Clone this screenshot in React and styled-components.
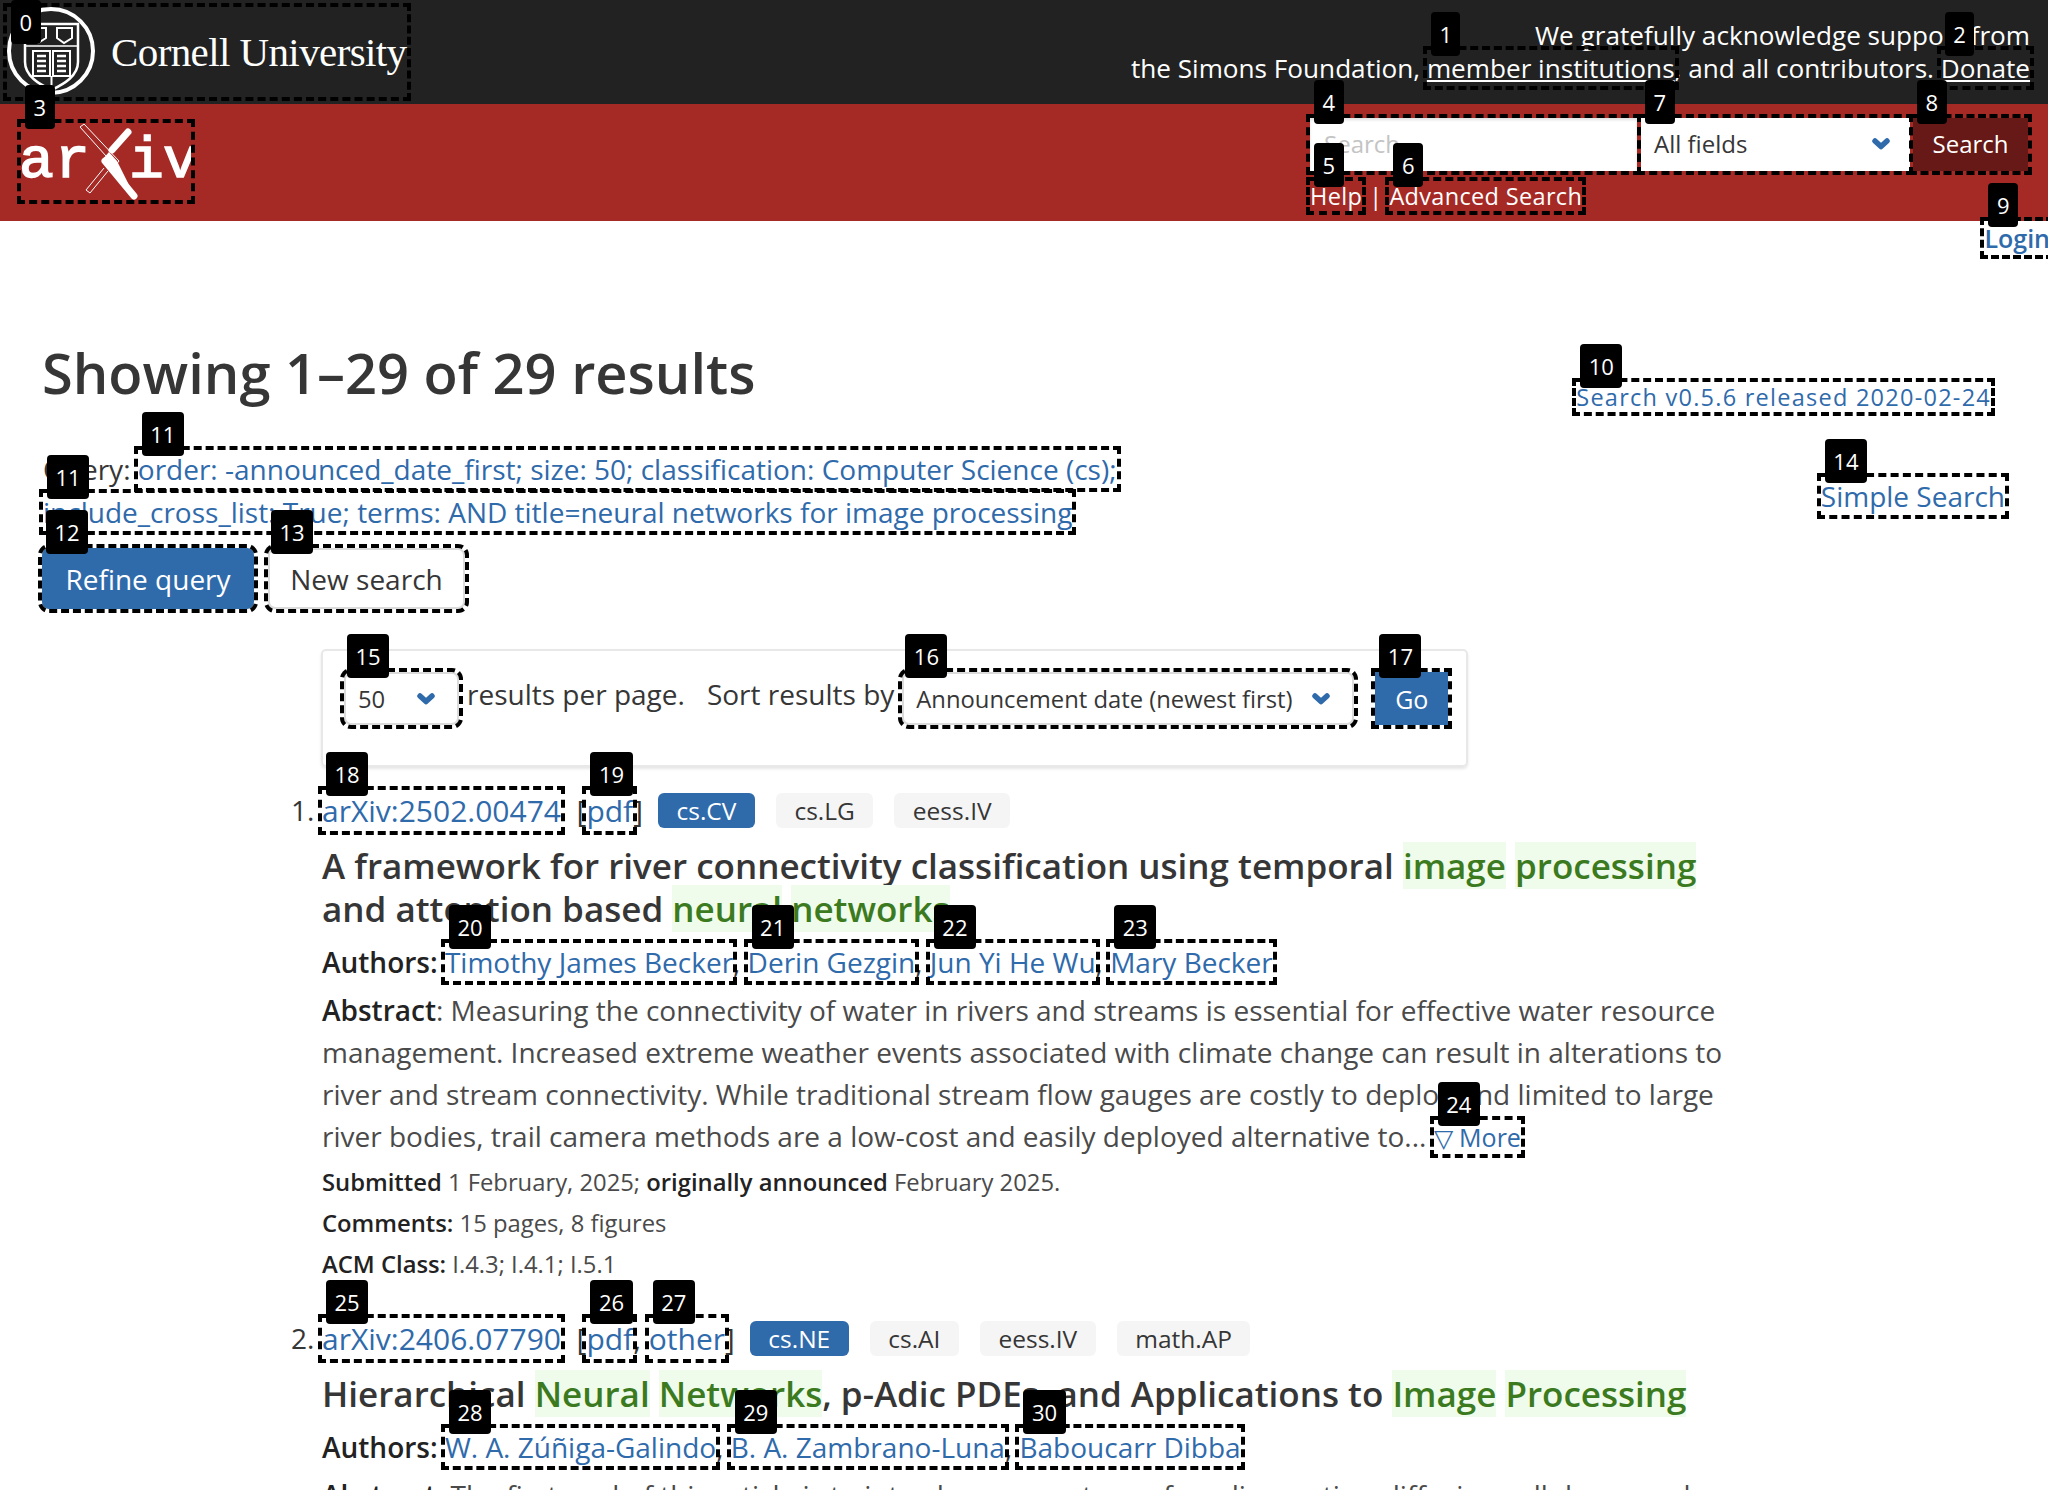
import React from 'react'
import styled, { createGlobalStyle } from 'styled-components'

const GlobalStyle = createGlobalStyle`
  html, body {
    margin: 0;
    padding: 0;
    background: #fff;
  }
  body {
    font-family: "Open Sans", "Noto Sans", sans-serif;
    color: #363636;
    overflow: hidden;
  }
  #root {
    width: 2048px;
    height: 1490px;
    overflow: hidden;
  }
`

const TopBar = styled.div`
  height: 104px;
  background: #222;
  display: flex;
  justify-content: space-between;
  align-items: flex-start;
  color: #fff;
`

const CornellBox = styled.a`
  position: relative;
  display: flex;
  align-items: center;
  gap: 14px;
  width: 400px;
  height: 90px;
  margin: 7px 0 0 7px;
  outline: 4px dashed #000;
  color: #fff;
`

const CornellName = styled.span`
  font-family: "Liberation Serif", serif;
  font-size: 41px;
  letter-spacing: -0.6px;
  white-space: nowrap;
`

const Support = styled.div`
  margin: 19px 18px 0 0;
  font-size: 26.150px;
  line-height: 33px;
  text-align: right;
`

const TopLink = styled.a`
  position: relative;
  color: #fff;
  text-decoration: underline;
  outline: 4px dashed #000;
`

const RedBar = styled.div`
  height: 117px;
  background: #a52a25;
  display: flex;
  justify-content: space-between;
  align-items: flex-start;
`

const ArxivBox = styled.a`
  position: relative;
  display: block;
  width: 170px;
  height: 77px;
  margin: 19px 0 0 21px;
  outline: 4px dashed #000;
`

const SearchArea = styled.div`
  margin: 14px 20px 0 0;
  display: flex;
  flex-direction: column;
  width: 718px;
`

const SearchRow = styled.div`
  display: flex;
  height: 53px;
`

const Field = styled.span`
  position: relative;
  display: flex;
  outline: 4px dashed #000;
  flex: none;
  width: ${p => p.$width};
  margin-right: ${p => p.$gap || '0'};
`

const SearchInput = styled.input`
  width: 100%;
  box-sizing: border-box;
  border: 0;
  padding: 0 14px 2px;
  font: 400 24px "Open Sans", sans-serif;
  background: #fff;
  box-shadow: inset 0 2px 3px rgba(10, 10, 10, 0.12);
  &::placeholder {
    color: #c4c4c4;
  }
`

const FieldSelect = styled.div`
  display: flex;
  align-items: center;
  justify-content: space-between;
  box-sizing: border-box;
  width: 100%;
  padding: 0 20px 2px 13px;
  background: #fff;
  font-size: 24px;
  color: #363636;
`

const SearchButton = styled.button`
  width: 100%;
  border: 0;
  padding: 0 0 2px;
  background: #661916;
  color: #fff;
  font: 400 24px "Open Sans", sans-serif;
`

const SearchHelp = styled.div`
  display: flex;
  align-items: center;
  margin-top: 10px;
  font-size: 23.500px;
  letter-spacing: 0.33px;
  line-height: 30px;
  color: #fff;
`

const HelpLink = styled.a`
  position: relative;
  display: inline-block;
  color: #fff;
  outline: 4px dashed #000;
`

const HelpSep = styled.span`
  margin: 0 7px;
`

const Page = styled.main`
  position: relative;
`

const LoginRow = styled.div`
  display: flex;
  justify-content: flex-end;
  height: 36px;
  margin-right: -2px;
`

const LoginLink = styled.a`
  position: relative;
  align-self: flex-start;
  font-size: 25px;
  font-weight: 600;
  color: #2f6aab;
  outline: 4px dashed #000;
`

const HeadRow = styled.div`
  display: flex;
  justify-content: space-between;
  padding: 79px 57px 0 42px;
`

const Heading = styled.h1`
  margin: 0;
  font-size: 56px;
  font-weight: 600;
  line-height: 72px;
  color: #363636;
`

const Release = styled.a`
  position: relative;
  display: inline-block;
  margin-top: 46px;
  align-self: flex-start;
  font-size: 23.500px;
  letter-spacing: 1.25px;
  line-height: 30px;
  white-space: nowrap;
  color: #2f6aab;
  outline: 4px dashed #000;
`

const QueryRow = styled.div`
  display: flex;
  justify-content: space-between;
  padding: 0 43px;
  margin-top: 36px;
`

const QueryText = styled.div`
  font-size: 28px;
  line-height: 43px;
  color: #363636;
`

const Link = styled.a`
  position: relative;
  color: #2f6aab;
  font-size: ${p => p.$size || 'inherit'};
  outline: 4px dashed #000;
`

const SimpleLink = styled(Link)`
  align-self: flex-start;
  font-size: 28px;
  margin-top: 29px;
`

const ButtonRow = styled.div`
  display: flex;
  gap: 14px;
  padding: 14px 42px 0;
`

const QueryButton = styled.a`
  position: relative;
  display: flex;
  align-items: center;
  justify-content: center;
  box-sizing: border-box;
  width: ${p => p.$width};
  height: 61px;
  border-radius: 7px;
  font-size: 28px;
  outline: 4px dashed #000;
  background: ${p => (p.$primary ? '#2f6aab' : '#fff')};
  color: ${p => (p.$primary ? '#fff' : '#363636')};
  border: ${p => (p.$primary ? '0' : '2px solid #dbdbdb')};
`

const Controls = styled.div`
  box-sizing: border-box;
  display: flex;
  align-items: flex-start;
  width: 1147px;
  height: 118px;
  margin: 40px 0 0 321px;
  padding: 21px 20px 0 21px;
  border: 2px solid #e8e8e8;
  border-radius: 5px;
  box-shadow: 0 2px 3px rgba(10, 10, 10, 0.1);
  font-size: 28px;
`

const ControlSelect = styled.div`
  position: relative;
  display: flex;
  align-items: center;
  justify-content: space-between;
  box-sizing: border-box;
  flex: none;
  width: ${p => p.$width};
  height: 53px;
  margin-left: ${p => p.$left || '0'};
  padding: 0 22px 0 12px;
  border: 2px solid #dbdbdb;
  border-radius: 7px;
  font-size: 23.800px;
  white-space: nowrap;
  outline: 4px dashed #000;
`

const ControlLabel = styled.span`
  margin: ${p => p.$margin};
  line-height: 44px;
  white-space: nowrap;
`

const GoButton = styled.a`
  position: relative;
  display: flex;
  align-items: center;
  justify-content: center;
  flex: none;
  width: 73px;
  height: 53px;
  margin-left: 21px;
  background: #2f6aab;
  color: #fff;
  font-size: 25px;
  outline: 4px dashed #000;
`

const ResultList = styled.ol`
  list-style: none;
  margin: 19px 0 0 0;
  padding: 0 0 0 322px;
  width: 1411px;
`

const Result = styled.li`
  position: relative;
  margin-bottom: 29px;
`

const IdRow = styled.div`
  display: flex;
  align-items: center;
  height: 48px;
  font-size: 30px;
  white-space: pre;
`

const Number = styled.span`
  position: absolute;
  left: -31px;
  font-size: 28px;
`

const Tags = styled.span`
  display: flex;
  gap: 21px;
  margin-left: 15px;
`

const Tag = styled.span`
  display: flex;
  align-items: center;
  height: 35px;
  padding: 0 18.500px;
  border-radius: 6px;
  font-size: 24.500px;
  background: ${p => (p.$primary ? '#2f6aab' : '#f5f5f5')};
  color: ${p => (p.$primary ? '#fff' : '#363636')};
`

const Title = styled.p`
  margin: 10px 0 0;
  font-size: 35px;
  font-weight: 600;
  line-height: 43px;
  color: #363636;
`

const Hit = styled.span`
  background: #effceb;
  color: #3c7a1f;
`

const Authors = styled.p`
  margin: 11px 0 0;
  font-size: 28px;
  line-height: 42px;
  color: #363636;
`

const Strong = styled.strong`
  font-weight: 600;
  color: #222;
`

const Abstract = styled.p`
  margin: 6px 0 0;
  font-size: 28px;
  line-height: 42px;
  color: #4a4a4a;
`

const Meta = styled.p`
  margin: ${p => p.$margin || '0'};
  font-size: 23.800px;
  line-height: 41px;
  color: #4a4a4a;
`

const Badge = styled.span`
  position: absolute;
  z-index: 10;
  left: 4px;
  top: -38px;
  height: 44px;
  padding: 0 8.500px;
  border-radius: 4px;
  background: #000;
  color: #fff;
  font: 400 22px/44px "Open Sans", sans-serif;
  letter-spacing: 0;
  text-decoration: none;
  display: inline-block;
  white-space: nowrap;
`

const CornellBadge = styled(Badge)`
  top: -7px;
`

// the parent has a 2px border here, so absolute offsets start 2px further in
const BorderedBadge = styled(Badge)`
  left: 1px;
  top: -40px;
`

const Chevron = () => (
  <svg width="18" height="12" viewBox="0 0 18 12" fill="none">
    <path d="M3 3 L9 8.500 L15 3" stroke="#2f6aab" strokeWidth="5.500" strokeLinecap="round" strokeLinejoin="round" />
  </svg>
)

const CornellSeal = () => (
  <svg width="90" height="90" viewBox="0 0 90 90" fill="none" stroke="#fff" style={{ flex: 'none' }}>
    <circle cx="44" cy="44" r="42" strokeWidth="4" />
    <path d="M18 17 H71 V55 C71 69 57 77 44.500 83 C32 77 18 69 18 55 Z" strokeWidth="2.500" />
    <path d="M18 39 H71" strokeWidth="1.500" />
    <path d="M24 21 H39 V31 L31 36 L24 31 Z M50 21 H65 V31 L57 36 L50 31 Z" strokeWidth="2" />
    <path d="M26 44 H43 V69 H26 Z M46 44 H63 V69 H46 Z" strokeWidth="2" />
    <path d="M30 49 H39 M30 54 H39 M30 59 H39 M30 64 H39 M50 49 H59 M50 54 H59 M50 59 H59 M50 64 H59" strokeWidth="2.500" />
    <path d="M44.500 69 V83" strokeWidth="2" />
  </svg>
)

const ArxivLogo = () => (
  <svg width="170" height="77" viewBox="0 0 170 77" fill="#fff">
    <g fontFamily="'Liberation Mono', monospace" fontWeight="400" fontSize="58" stroke="#fff" strokeWidth="1.500">
      <text x="-2" y="54">a</text>
      <text x="34" y="54">r</text>
      <text x="108" y="54">i</text>
      <text x="142" y="54">v</text>
    </g>
    <path d="M107 9 L91 27" stroke="#fff" strokeWidth="7" strokeLinecap="round" />
    <path d="M84 38 L113 73" stroke="#fff" strokeWidth="7" strokeLinecap="round" />
    <path d="M81 37 L88 29 L96 38 L114 74 Z" stroke="none" />
    <path d="M63 1 L98 38 L94 43 L59 4 Z" fill="none" stroke="#fff" strokeWidth="1" />
    <path d="M87 48 L69 70 L65 67 L83 45" fill="none" stroke="#fff" strokeWidth="1" />
  </svg>
)

const authorsA = [['20', 'Timothy James Becker'], ['21', 'Derin Gezgin'], ['22', 'Jun Yi He Wu'], ['23', 'Mary Becker']]
const authorsB = [['28', 'W. A. Zúñiga-Galindo'], ['29', 'B. A. Zambrano-Luna'], ['30', 'Baboucarr Dibba']]

const AuthorLinks = ({ list }) => (
  <Authors>
    <Strong>Authors: </Strong>
    {list.map(([n, name], i) => (
      <React.Fragment key={n}>
        <Link>
          <Badge>{n}</Badge>
          {name}
        </Link>
        {i < list.length - 1 ? ', ' : ''}
      </React.Fragment>
    ))}
  </Authors>
)

export default function App() {
  return (
    <>
      <GlobalStyle />
      <TopBar>
        <CornellBox>
          <CornellBadge>0</CornellBadge>
          <CornellSeal />
          <CornellName>Cornell University</CornellName>
        </CornellBox>
        <Support>
          We gratefully acknowledge support from
          <br />
          the Simons Foundation, <TopLink><Badge>1</Badge>member institutions</TopLink>, and all contributors. <TopLink><Badge>2</Badge>Donate</TopLink>
        </Support>
      </TopBar>

      <RedBar>
        <ArxivBox>
          <Badge>3</Badge>
          <ArxivLogo />
        </ArxivBox>
        <SearchArea>
          <SearchRow>
            <Field $width="327px" $gap="4px">
              <Badge>4</Badge>
              <SearchInput placeholder="Search..." />
            </Field>
            <Field $width="269px" $gap="3px">
              <Badge>7</Badge>
              <FieldSelect>All fields<Chevron /></FieldSelect>
            </Field>
            <Field $width="115px">
              <Badge>8</Badge>
              <SearchButton>Search</SearchButton>
            </Field>
          </SearchRow>
          <SearchHelp>
            <HelpLink><Badge>5</Badge>Help</HelpLink>
            <HelpSep>|</HelpSep>
            <HelpLink><Badge>6</Badge>Advanced Search</HelpLink>
          </SearchHelp>
        </SearchArea>
      </RedBar>

      <Page>
        <LoginRow>
          <LoginLink><Badge>9</Badge>Login</LoginLink>
        </LoginRow>

        <HeadRow>
          <Heading>Showing 1–29 of 29 results</Heading>
          <Release><Badge>10</Badge>Search v0.5.6 released 2020-02-24</Release>
        </HeadRow>

        <QueryRow>
          <QueryText>
            Query: <Link><Badge>11</Badge>order: -announced_date_first; size: 50; classification: Computer Science (cs);</Link>
            <br />
            <Link><Badge>11</Badge>include_cross_list: True; terms: AND title=neural networks for image processing</Link>
          </QueryText>
          <SimpleLink><Badge>14</Badge>Simple Search</SimpleLink>
        </QueryRow>

        <ButtonRow>
          <QueryButton $primary $width="212px"><Badge>12</Badge>Refine query</QueryButton>
          <QueryButton $width="197px"><BorderedBadge>13</BorderedBadge>New search</QueryButton>
        </ButtonRow>

        <Controls>
          <ControlSelect $width="115px"><BorderedBadge>15</BorderedBadge>50<Chevron /></ControlSelect>
          <ControlLabel $margin="0 0 0 8px">results per page.</ControlLabel>
          <ControlLabel $margin="0 0 0 22px">Sort results by</ControlLabel>
          <ControlSelect $width="452px" $left="8px"><BorderedBadge>16</BorderedBadge>Announcement date (newest first)<Chevron /></ControlSelect>
          <GoButton><Badge>17</Badge>Go</GoButton>
        </Controls>

        <ResultList>
          <Result>
            <IdRow>
              <Number>1.</Number>
              <Link><Badge>18</Badge>arXiv:2502.00474</Link>
              <span>{'  ['}</span>
              <Link><Badge>19</Badge>pdf</Link>
              <span>]</span>
              <Tags>
                <Tag $primary>cs.CV</Tag>
                <Tag>cs.LG</Tag>
                <Tag>eess.IV</Tag>
              </Tags>
            </IdRow>
            <Title>
              A framework for river connectivity classification using temporal <Hit>image</Hit> <Hit>processing</Hit>
              <br />
              and attention based <Hit>neural</Hit> <Hit>networks</Hit>
            </Title>
            <AuthorLinks list={authorsA} />
            <Abstract>
              <Strong>Abstract</Strong>: Measuring the connectivity of water in rivers and streams is essential for effective water resource
              management. Increased extreme weather events associated with climate change can result in alterations to
              river and stream connectivity. While traditional stream flow gauges are costly to deploy and limited to large
              river bodies, trail camera methods are a low-cost and easily deployed alternative to... <Link $size="25px"><Badge>24</Badge>▽ More</Link>
            </Abstract>
            <Meta $margin="4px 0 0"><Strong>Submitted</Strong> 1 February, 2025; <Strong>originally announced</Strong> February 2025.</Meta>
            <Meta><Strong>Comments:</Strong> 15 pages, 8 figures</Meta>
            <Meta><Strong>ACM Class:</Strong> I.4.3; I.4.1; I.5.1</Meta>
          </Result>
          <Result>
            <IdRow>
              <Number>2.</Number>
              <Link><Badge>25</Badge>arXiv:2406.07790</Link>
              <span>{'  ['}</span>
              <Link><Badge>26</Badge>pdf</Link>
              <span>, </span>
              <Link><Badge>27</Badge>other</Link>
              <span>]</span>
              <Tags>
                <Tag $primary>cs.NE</Tag>
                <Tag>cs.AI</Tag>
                <Tag>eess.IV</Tag>
                <Tag>math.AP</Tag>
              </Tags>
            </IdRow>
            <Title>
              Hierarchical <Hit>Neural</Hit> <Hit>Networks</Hit>, p-Adic PDEs, and Applications to <Hit>Image</Hit> <Hit>Processing</Hit>
            </Title>
            <AuthorLinks list={authorsB} />
            <Abstract>
              <Strong>Abstract</Strong>: The first goal of this article is to introduce a new type of p-adic reaction-diffusion cellular neural
            </Abstract>
          </Result>
        </ResultList>
      </Page>
    </>
  )
}
